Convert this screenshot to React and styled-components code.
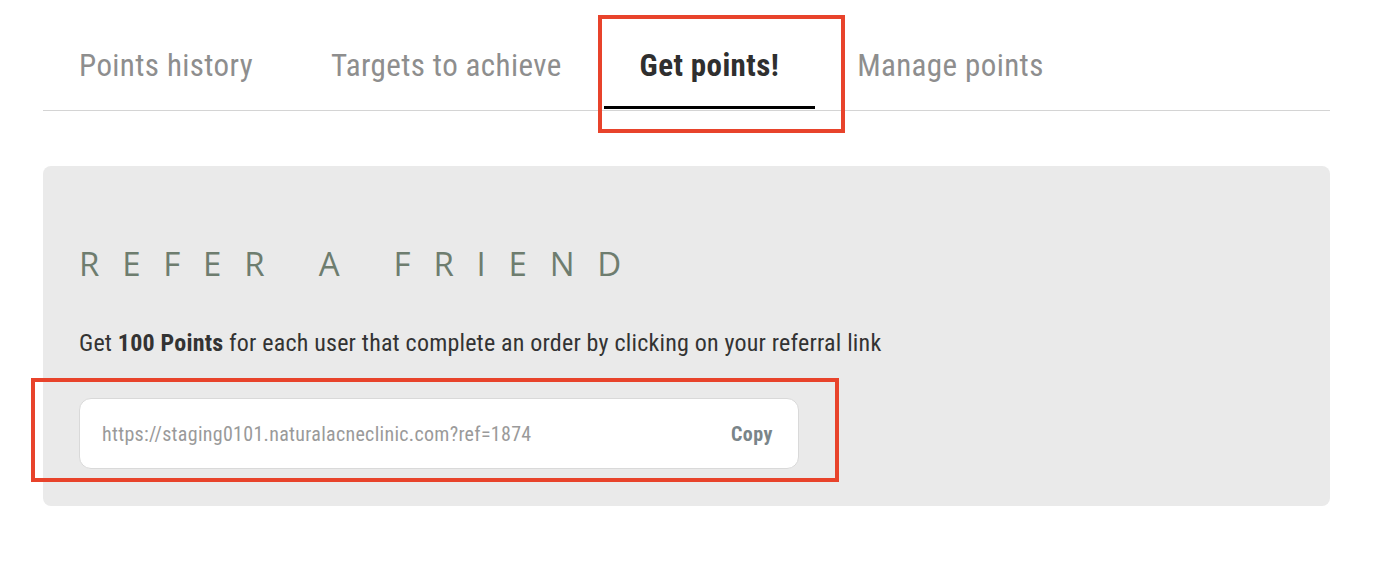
import React from 'react';
import styled, { createGlobalStyle } from 'styled-components';

const tabs = ['Points history', 'Targets to achieve', 'Get points!', 'Manage points'];
const referralLink = 'https://staging0101.naturalacneclinic.com?ref=1874';

export default function App() {
  return (
    <Page>
      <GlobalStyle />
      <Tabs>
        {tabs.map(tab => (
          <Tab key={tab} active={tab === 'Get points!'}>
            {tab}
          </Tab>
        ))}
      </Tabs>
      <Card>
        <Title>Refer a friend</Title>
        <Lead>
          Get <strong>100 Points</strong> for each user that complete an order by
          clicking on your referral link
        </Lead>
        <LinkField>
          <LinkText>{referralLink}</LinkText>
          <CopyButton>Copy</CopyButton>
        </LinkField>
      </Card>
      <Highlight top={15} left={598} width={247} height={118} />
      <Highlight top={378} left={31} width={808} height={104} />
    </Page>
  );
}

const GlobalStyle = createGlobalStyle`
  body {
    margin: 0;
    background: #fff;
    font-family: Roboto, "Liberation Sans", sans-serif;
    font-stretch: 80%;
  }
`;

const Page = styled.div`
  position: relative;
  height: 570px;
  padding: 0 46px 0 43px;
  box-sizing: border-box;
`;

const Tabs = styled.ul`
  display: flex;
  gap: 6px;
  margin: 0;
  padding: 0;
  list-style: none;
  border-bottom: 1px solid #d4d4d4;
`;

const Tab = styled.li`
  padding: 48px 36px 22px;
  margin-bottom: 1px;
  font-size: 31px;
  line-height: 36px;
  letter-spacing: 0.4px;
  font-weight: ${p => (p.active ? 700 : 400)};
  color: ${p => (p.active ? '#2f2f2f' : '#8e8e8e')};
  border-bottom: 3px solid ${p => (p.active ? '#000' : 'transparent')};
`;

const Card = styled.section`
  margin-top: 55px;
  padding: 78px 36px 37px;
  background: #eaeaea;
  border-radius: 8px;
`;

const Title = styled.h2`
  margin: 0;
  font-family: "Open Sans", "Liberation Sans", sans-serif;
  font-stretch: 100%;
  font-weight: 400;
  font-size: 33px;
  line-height: 40px;
  letter-spacing: 0.69em;
  text-transform: uppercase;
  color: #6e7d6f;
`;

const Lead = styled.p`
  margin: 44px 0 0;
  font-size: 24px;
  line-height: 30px;
  letter-spacing: 0.2px;
  color: #333;

  strong {
    font-weight: 700;
  }
`;

const LinkField = styled.div`
  display: flex;
  align-items: center;
  justify-content: space-between;
  width: 720px;
  height: 71px;
  margin-top: 40px;
  padding: 0 25px 0 22px;
  box-sizing: border-box;
  background: #fff;
  border: 1px solid #d9d9d9;
  border-radius: 12px;
`;

const LinkText = styled.span`
  font-size: 20px;
  letter-spacing: 0.3px;
  color: #9a9a9a;
`;

const CopyButton = styled.button`
  padding: 0;
  border: 0;
  background: none;
  font-family: inherit;
  font-stretch: inherit;
  font-size: 20px;
  letter-spacing: 0.5px;
  font-weight: 700;
  color: #7a8589;
  cursor: pointer;
`;

const Highlight = styled.div`
  position: absolute;
  top: ${p => p.top}px;
  left: ${p => p.left}px;
  width: ${p => p.width}px;
  height: ${p => p.height}px;
  border: 4px solid #e8432b;
  box-sizing: border-box;
  pointer-events: none;
`;
